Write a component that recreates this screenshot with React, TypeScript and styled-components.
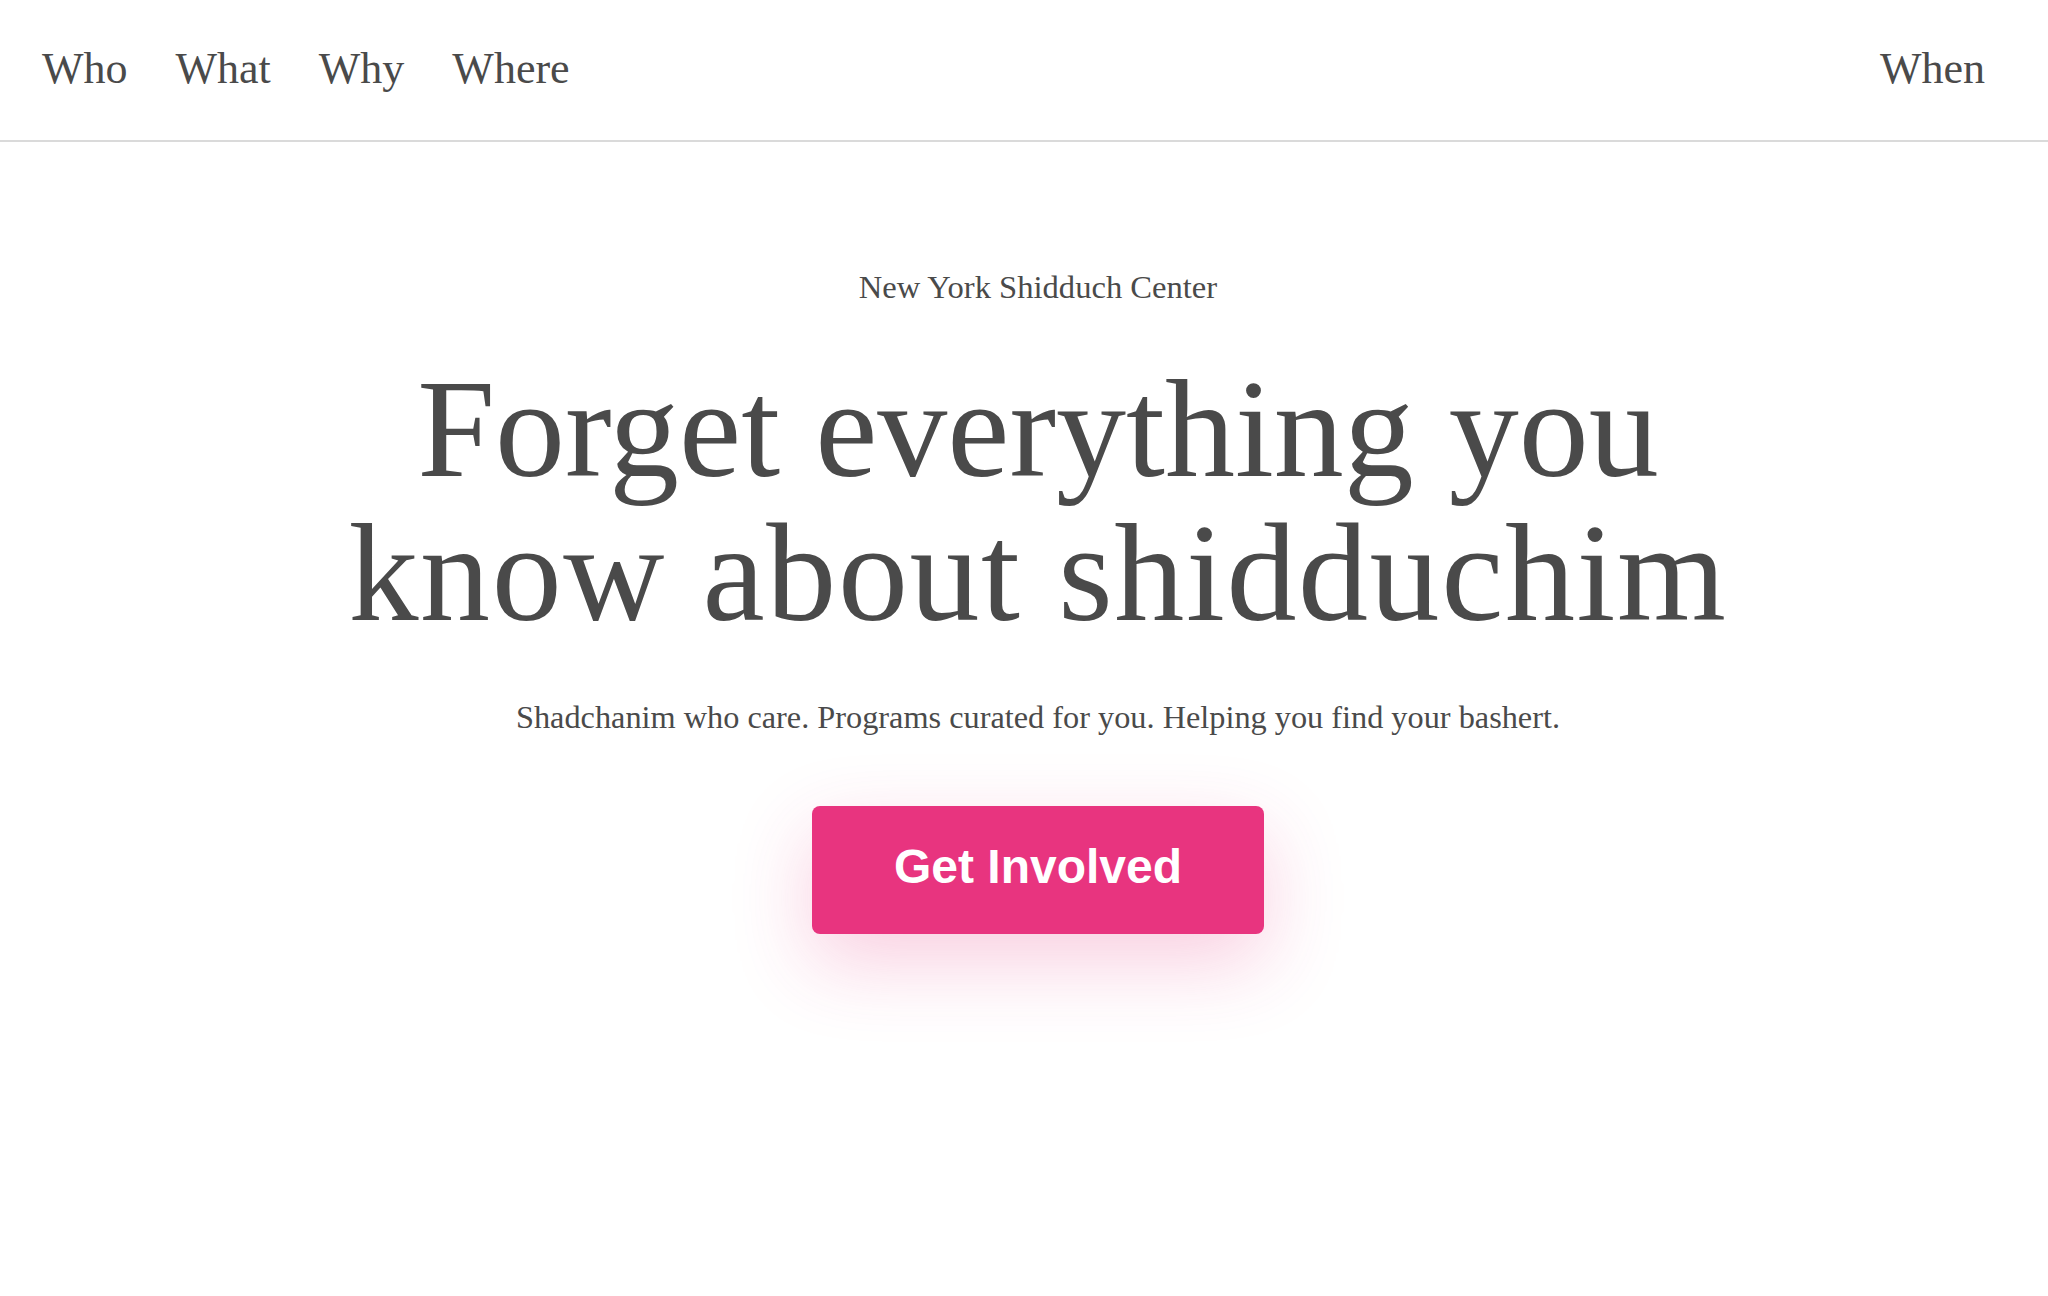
import React from "react";
import styled, { createGlobalStyle } from "styled-components";

const GlobalStyle = createGlobalStyle`
  html, body {
    margin: 0;
    padding: 0;
    background: #ffffff;
  }
  body {
    font-family: "Liberation Serif", "Times New Roman", serif;
    color: #4a4a4a;
  }
  * { box-sizing: border-box; }
`;

const Page = styled.div`
  min-height: 1296px;
  display: flex;
  flex-direction: column;
`;

const NavBar = styled.nav`
  height: 142px;
  border-bottom: 2px solid #dadada;
  display: flex;
  align-items: center;
  justify-content: space-between;
  padding: 0 63px 3px 42px;
`;

const NavGroup = styled.div`
  display: flex;
  align-items: center;
  gap: 48px;
`;

const NavLink = styled.a`
  font-family: "Liberation Serif", "Times New Roman", serif;
  font-size: 44px;
  line-height: 1;
  color: #4a4a4a;
  text-decoration: none;
  cursor: pointer;
`;

const Hero = styled.main`
  display: flex;
  flex-direction: column;
  align-items: center;
  text-align: center;
  padding: 125px 0 0 28px;
`;

const Eyebrow = styled.p`
  margin: 0;
  font-size: 32.6px;
  line-height: 40px;
  color: #4a4a4a;
`;

const Headline = styled.h1`
  margin: 50px 0 0;
  font-family: "Liberation Serif", "Times New Roman", serif;
  font-weight: 400;
  font-size: 140px;
  line-height: 144px;
  color: #4a4a4a;
`;

const HeadlineLine = styled.span<{ $tracking?: number }>`
  display: block;
  letter-spacing: ${(p) => p.$tracking ?? 0}px;
`;

const Tagline = styled.p`
  margin: 52px 0 0;
  font-size: 32.3px;
  line-height: 40px;
  color: #4a4a4a;
`;

const CTAButton = styled.button`
  margin-top: 69px;
  width: 452px;
  height: 128px;
  padding: 0 0 8px;
  border: none;
  border-radius: 8px;
  background: #e8347f;
  color: #ffffff;
  font-family: "Liberation Sans", Arial, Helvetica, sans-serif;
  font-weight: 700;
  font-size: 48px;
  cursor: pointer;
  box-shadow: 0 28px 80px rgba(232, 52, 127, 0.24);
`;

export default function App() {
  return (
    <Page>
      <GlobalStyle />
      <NavBar>
        <NavGroup>
          <NavLink>Who</NavLink>
          <NavLink>What</NavLink>
          <NavLink>Why</NavLink>
          <NavLink>Where</NavLink>
        </NavGroup>
        <NavGroup>
          <NavLink>When</NavLink>
        </NavGroup>
      </NavBar>
      <Hero>
        <Eyebrow>New York Shidduch Center</Eyebrow>
        <Headline>
          <HeadlineLine>Forget everything you</HeadlineLine>
          <HeadlineLine $tracking={1.6}>know about shidduchim</HeadlineLine>
        </Headline>
        <Tagline>
          Shadchanim who care. Programs curated for you. Helping you find your bashert.
        </Tagline>
        <CTAButton>Get Involved</CTAButton>
      </Hero>
    </Page>
  );
}
